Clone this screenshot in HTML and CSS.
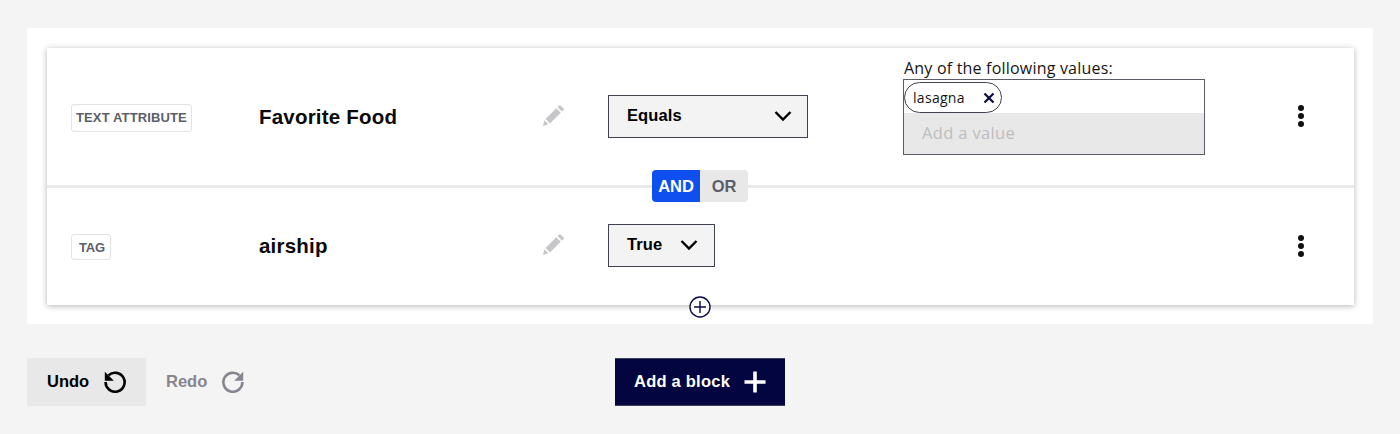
FILE: index.html
```html
<!DOCTYPE html>
<html lang="en">
<head>
<meta charset="utf-8">
<title>Segment builder</title>
<link rel="stylesheet" href="styles.css">
</head>
<body>
<main class="page">
  <section class="panel">
    <div class="card">
      <div class="row row-first">
        <div class="tag-cell"><span class="tag">TEXT ATTRIBUTE</span></div>
        <div class="name">Favorite Food</div>
        <div class="edit-cell">
          <svg class="pencil" viewBox="0 0 24 24"><path d="M1 23l1.600-6.400L6.900 21z"/><path d="M3.800 15.300L15.600 3.500l4.900 4.900L8.700 20.200z"/><path d="M16.900 2.200l1.500-1.500a1.500 1.500 0 0 1 2.100 0l2.800 2.800a1.500 1.500 0 0 1 0 2.100l-1.500 1.500z"/></svg>
        </div>
        <div class="select-cell">
          <div class="select select-wide">
            <span>Equals</span>
            <svg class="chevron" viewBox="0 0 18 12"><path d="M1.500 2l7.500 7.500L16.500 2"/></svg>
          </div>
        </div>
        <div class="values">
          <div class="values-label">Any of the following values:</div>
          <div class="values-box">
            <div class="chips">
              <span class="chip">lasagna
                <svg class="chip-x" viewBox="0 0 12 12"><path d="M1.500 1.500l9 9M10.500 1.500l-9 9"/></svg>
              </span>
            </div>
            <div class="add-value">Add a value</div>
          </div>
        </div>
        <div class="more-cell"><span class="more"><i></i><i></i><i></i></span></div>
      </div>
      <div class="row row-second">
        <div class="tag-cell"><span class="tag">TAG</span></div>
        <div class="name">airship</div>
        <div class="edit-cell">
          <svg class="pencil" viewBox="0 0 24 24"><path d="M1 23l1.600-6.400L6.900 21z"/><path d="M3.800 15.300L15.600 3.500l4.900 4.900L8.700 20.200z"/><path d="M16.900 2.200l1.500-1.500a1.500 1.500 0 0 1 2.100 0l2.800 2.800a1.500 1.500 0 0 1 0 2.100l-1.500 1.500z"/></svg>
        </div>
        <div class="select-cell">
          <div class="select select-narrow">
            <span>True</span>
            <svg class="chevron" viewBox="0 0 18 12"><path d="M1.500 2l7.500 7.500L16.500 2"/></svg>
          </div>
        </div>
        <div class="values"></div>
        <div class="more-cell"><span class="more"><i></i><i></i><i></i></span></div>
      </div>
      <div class="logic"><span class="logic-on">AND</span><span class="logic-off">OR</span></div>
      <svg class="add-row" viewBox="0 0 22 22"><circle cx="11" cy="11" r="10"/><path d="M11 5v12M5 11h12"/></svg>
    </div>
  </section>
  <div class="toolbar">
    <div class="history">
      <button class="btn btn-undo"><span class="btn-label">Undo</span>
        <svg class="hist-icon" viewBox="0 0 24 24"><path d="M5.600 6.300A9.500 9.500 0 1 1 2.600 13"/><path class="fill" d="M1.800 2.800v9h9z"/></svg>
      </button>
      <button class="btn btn-redo"><span class="btn-label">Redo</span>
        <svg class="hist-icon" viewBox="0 0 24 24"><path d="M18.400 6.300A9.500 9.500 0 1 0 21.400 13"/><path class="fill" d="M22.200 2.800v9h-9z"/></svg>
      </button>
    </div>
    <button class="btn btn-add"><span class="btn-label">Add a block</span>
      <svg class="plus" viewBox="0 0 24 24"><path d="M12 1.500v21M1.500 12h21"/></svg>
    </button>
    <div></div>
  </div>
</main>
</body>
</html>
```
FILE: styles.css
```css
* { box-sizing: border-box; }

html, body { margin: 0; padding: 0; }

body {
  background: #f4f4f4;
  color: #000;
  font-family: "Liberation Sans", Arial, sans-serif;
  height: 434px;
  overflow: hidden;
}

.page { padding: 28px 27px 0; }

.panel {
  background: #fff;
  padding: 20px 19px 19px 20px;
}

.card {
  position: relative;
  background: #fff;
  box-shadow: 0 1px 6px rgba(0, 0, 0, 0.3);
}

.row {
  display: grid;
  grid-template-columns: 188px 284px 65px 296px 301px 1fr;
  align-items: center;
  padding-left: 24px;
}

.row-first { height: 138px; }

.row-second {
  height: 120px;
  margin-top: -1px;
  border-top: 3px solid #e9e9e9;
  padding-bottom: 1px;
}

.tag-cell { display: flex; }

.tag {
  display: inline-block;
  height: 28px;
  line-height: 26px;
  padding: 0 4px;
  border: 1px solid #e3e3e5;
  border-radius: 3px;
  color: #5c5f69;
  font-size: 13px;
  font-weight: 700;
  letter-spacing: 0.13px;
  white-space: nowrap;
}

.row-first .tag { margin-top: 2px; }

.row-second .tag { width: 40px; height: 26px; line-height: 25px; padding: 0 0 0 7px; letter-spacing: -0.2px; margin-top: 1px; }

.name {
  font-size: 20.500px;
  font-weight: 700;
  letter-spacing: 0.2px;
  color: #0a0a0a;
}

.edit-cell { display: flex; }

.pencil { width: 22px; height: 22px; margin: 0 0 2px -1px; fill: #c6c6c9; }

.select-cell { display: flex; }

.select {
  display: flex;
  align-items: center;
  justify-content: space-between;
  background: #f3f3f3;
  border: 1px solid #3f4250;
  font-size: 16.500px;
  font-weight: 700;
  letter-spacing: 0.1px;
  margin-bottom: 2px;
}

.select-wide { width: 200px; height: 43px; padding: 0 15px 2px 18px; }
.select-narrow { width: 107px; height: 43px; padding: 0 16px 2px 18px; }

.chevron {
  width: 18px;
  height: 12px;
  margin-top: 2px;
  fill: none;
  stroke: #000;
  stroke-width: 2.400;
}

.values { align-self: start; }

.row-first .values { padding-top: 10px; }

.values-label {
  font-family: "Open Sans", sans-serif;
  font-size: 16px;
  line-height: 21px;
  letter-spacing: 0.2px;
  color: #161616;
}

.values-box {
  width: 302px;
  height: 76px;
  margin-left: -1px;
  border: 1px solid #5a5c68;
  background: #fff;
  display: flex;
  flex-direction: column;
}

.chips { height: 33px; padding-top: 2px; display: flex; }

.chip {
  display: inline-flex;
  align-items: center;
  justify-content: space-between;
  width: 98px;
  height: 31px;
  padding: 0 6px 0 8px;
  border: 1px solid #3f4250;
  border-radius: 16px;
  font-family: "Open Sans", sans-serif;
  font-size: 14px;
  letter-spacing: 0.3px;
  color: #161616;
  background: #fff;
}

.chip-x {
  width: 12px;
  height: 12px;
  fill: none;
  stroke: #0a0a45;
  stroke-width: 2.200;
}

.add-value {
  flex: 1;
  background: #e8e8e8;
  padding: 9px 18px 0;
  font-family: "Open Sans", sans-serif;
  font-size: 16.500px;
  letter-spacing: 0.35px;
  line-height: 22px;
  color: #bdbdbf;
}

.more-cell { display: flex; padding-left: 93px; }

.more { display: flex; flex-direction: column; gap: 2px; }

.row-first .more { margin-bottom: 2px; }

.more i { display: block; width: 6px; height: 6px; border-radius: 50%; background: #111; }

.logic {
  position: absolute;
  left: 605px;
  top: 122px;
  display: flex;
  height: 32px;
  border-radius: 4px;
  overflow: hidden;
  font-size: 16.500px;
  font-weight: 700;
  line-height: 32px;
  text-align: center;
}

.logic-on { width: 48px; background: #0f4ff0; color: #fff; }
.logic-off { width: 48px; background: #e8e8e8; color: #5c5f69; }

.add-row {
  position: absolute;
  left: 642px;
  top: 248px;
  width: 22px;
  height: 22px;
  fill: #fff;
  stroke: #0a0a45;
  stroke-width: 1.400;
}

.toolbar {
  display: grid;
  grid-template-columns: 1fr auto 1fr;
  margin-top: 34px;
}

.history { display: flex; }

.btn {
  display: inline-flex;
  align-items: center;
  height: 48px;
  border: 0;
  font-family: "Liberation Sans", Arial, sans-serif;
  font-size: 16.500px;
  font-weight: 700;
  padding: 0;
}

.btn-label { margin-bottom: 2px; }

.btn-undo {
  width: 119px;
  padding-left: 20px;
  gap: 14px;
  background: #e8e8e8;
  color: #000;
}

.btn-redo {
  margin-left: 20px;
  gap: 14px;
  background: transparent;
  color: #85868f;
}

.hist-icon {
  width: 24px;
  height: 24px;
  margin-bottom: 3px;
  fill: none;
  stroke: currentColor;
  stroke-width: 2.600;
}

.hist-icon .fill { fill: currentColor; stroke: none; }

.btn-add {
  width: 170px;
  padding-left: 19px;
  gap: 13px;
  background: #020540;
  color: #fff;
  border: 1px solid #3f4250;
  border-width: 1px 0;
  letter-spacing: 0.23px;
}

.plus {
  width: 24px;
  height: 24px;
  fill: none;
  stroke: #fff;
  stroke-width: 3.600;
}
```
